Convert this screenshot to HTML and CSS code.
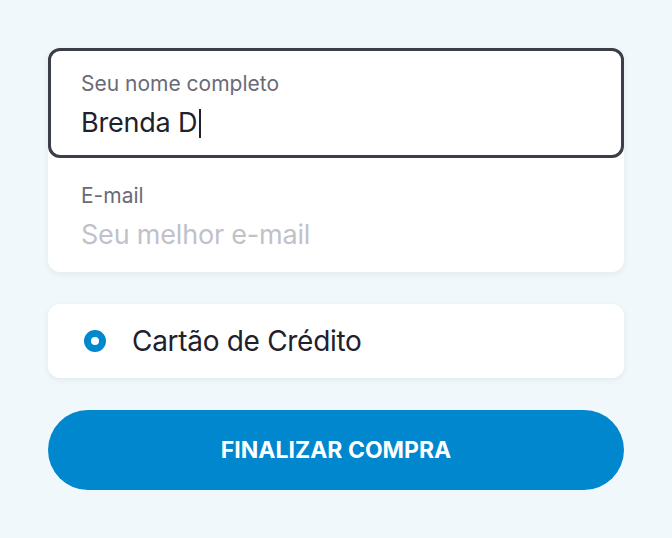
FILE: index.html
```html
<!DOCTYPE html>
<html lang="pt-BR">
<head>
  <meta charset="UTF-8" />
  <meta name="viewport" content="width=device-width, initial-scale=1.0"/>
  <title>Checkout</title>
  <link rel="stylesheet" href="styles.css">
</head>
<body>

  <div class="checkout">
    <!-- Dados do cliente -->
    <div class="card fields">
      <div class="field active">
        <label class="field-label">Seu nome completo</label>
        <div class="field-value">Brenda D<span class="caret"></span></div>
      </div>
      <div class="field">
        <label class="field-label">E-mail</label>
        <div class="field-value placeholder">Seu melhor e-mail</div>
      </div>
    </div>

    <!-- Pagamento -->
    <div class="card payment">
      <span class="radio"></span>
      <span class="payment-name">Cartão de Crédito</span>
    </div>

    <button class="submit">Finalizar compra</button>
  </div>

</body>
</html>
```

FILE: styles.css
```css
* { box-sizing: border-box; margin: 0; padding: 0; font-family: Inter, "Noto Sans", sans-serif; }
body { background-color: #f1f8fc; }
.checkout {
  padding: 48px;
  display: flex;
  flex-direction: column;
  gap: 32px;
}
.card {
  background: white;
  border-radius: 12px;
  box-shadow: 0 2px 6px rgba(20, 40, 60, 0.07);
}
.field {
  border: 3px solid transparent;
  border-radius: 12px;
  padding: 23px 30px 17px;
}
.field.active {
  border-color: #3b3d47;
  padding: 21px 30px 15px;
}
.field-label {
  display: block;
  font-size: 21px;
  line-height: 24px;
  color: #6b6a75;
  margin-bottom: 10px;
}
.field-value {
  font-size: 27px;
  line-height: 34px;
  color: #20212b;
  letter-spacing: -0.2px;
  display: flex;
  align-items: center;
}
.field-value.placeholder { color: #c2c1c9; }
.caret {
  display: inline-block;
  width: 2px;
  height: 29px;
  background: #20212b;
  margin-left: 2px;
}
.payment {
  height: 74px;
  display: flex;
  align-items: center;
  padding-left: 36px;
  gap: 26px;
}
.radio {
  width: 22px;
  height: 22px;
  border-radius: 50%;
  border: 7px solid #0087ce;
  background: white;
}
.payment-name {
  font-size: 28px;
  color: #20212b;
  letter-spacing: -0.3px;
}
.submit {
  height: 80px;
  border: none;
  border-radius: 40px;
  background-color: #0087ce;
  color: white;
  font-size: 23px;
  font-weight: 700;
  text-transform: uppercase;
  cursor: pointer;
}
```
